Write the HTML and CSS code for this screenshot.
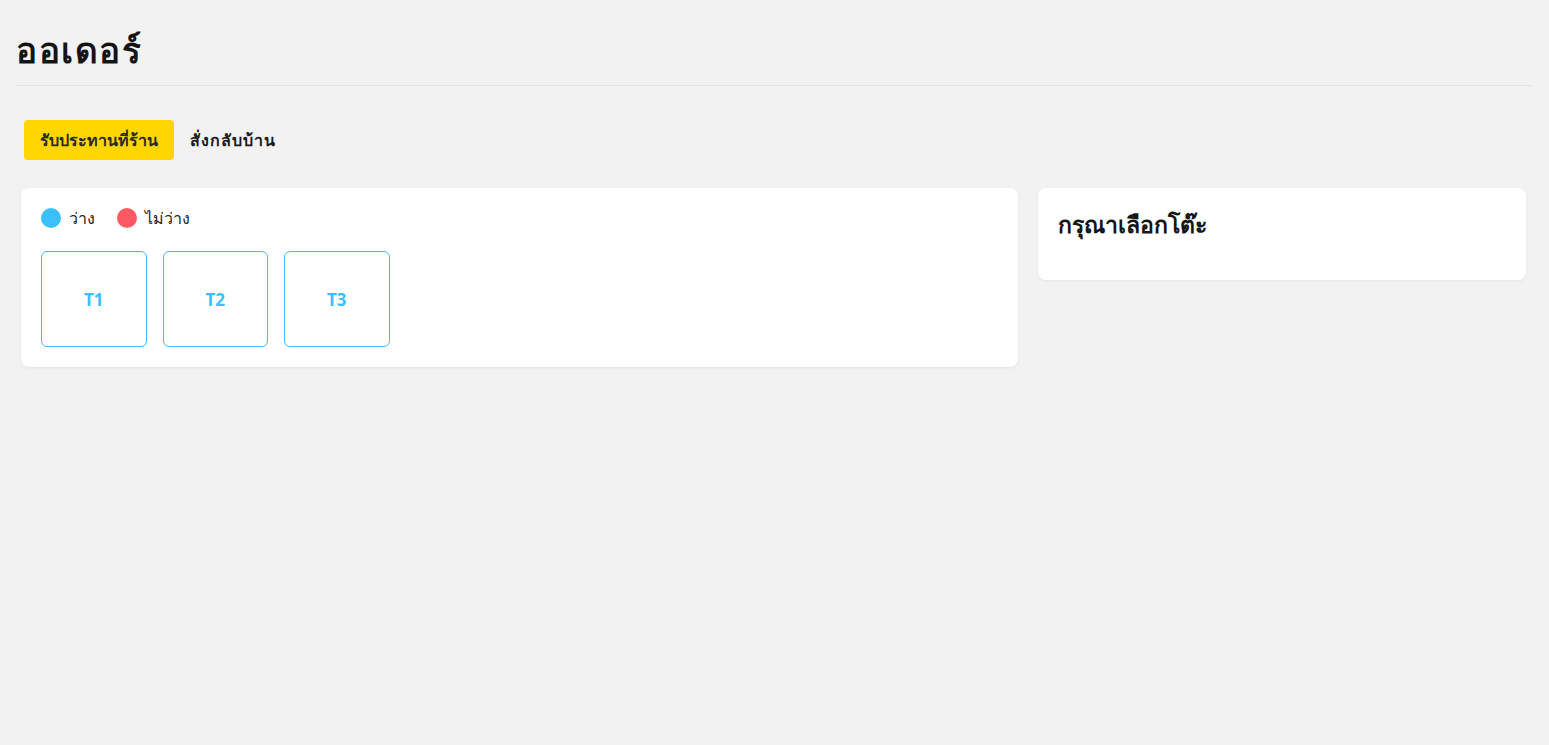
FILE: index.html
```html
<!DOCTYPE html>
<html lang="th">
<head>
<meta charset="utf-8">
<title>ออเดอร์</title>
<link rel="stylesheet" href="styles.css">
</head>
<body>
<div class="page">
  <header class="page-header">
    <h1 class="page-title">ออเดอร์</h1>
  </header>
  <nav class="tabs">
    <button class="tab tab-active">รับประทานที่ร้าน</button>
    <button class="tab tab-plain">สั่งกลับบ้าน</button>
  </nav>
  <main class="content">
    <section class="card tables-card">
      <div class="legend">
        <span class="legend-item"><span class="dot dot-free"></span>ว่าง</span>
        <span class="legend-item"><span class="dot dot-busy"></span>ไม่ว่าง</span>
      </div>
      <div class="table-list">
        <button class="table-box">T1</button>
        <button class="table-box">T2</button>
        <button class="table-box">T3</button>
      </div>
    </section>
    <aside class="card side-card">
      <h2 class="side-title">กรุณาเลือกโต๊ะ</h2>
    </aside>
  </main>
</div>
</body>
</html>
```
FILE: styles.css
```css
* { box-sizing: border-box; }
html, body { margin: 0; padding: 0; }
body {
  background: #f2f2f2;
  font-family: "Noto Sans", "Open Sans", sans-serif;
  color: #1a1a1a;
}
.page {
  padding: 16px 17px 16px 16px;
}
.page-header {
  border-bottom: 1px solid #e3e3e3;
  height: 70px;
  display: flex;
  align-items: center;
}
.page-title {
  margin: 0 0 2px 0;
  font-size: 35px;
  font-weight: 800;
  letter-spacing: 1.5px;
  color: #141414;
  line-height: 1;
}
.tabs {
  display: flex;
  gap: 0;
  padding: 34px 0 0 8px;
}
.tab {
  border: none;
  background: transparent;
  font-family: inherit;
  font-size: 16px;
  font-weight: 600;
  color: #1a1a1a;
  height: 40px;
  padding: 0 16px;
  border-radius: 4px;
  cursor: pointer;
}
.tab-active {
  background: #ffd600;
  color: #2a2a2a;
}
.tab-plain {
  letter-spacing: 1px;
}
.content {
  display: grid;
  grid-template-columns: 997fr 488fr;
  gap: 20px;
  align-items: start;
  padding: 28px 6px 0 5px;
}
.card {
  background: #fff;
  border-radius: 8px;
  box-shadow: 0 1px 3px rgba(0,0,0,0.06);
}
.tables-card {
  padding: 20px;
}
.legend {
  display: flex;
  gap: 22px;
  align-items: center;
  height: 20px;
}
.legend-item {
  display: flex;
  align-items: center;
  gap: 8px;
  font-size: 16px;
  color: #222;
}
.dot {
  width: 20px;
  height: 20px;
  border-radius: 50%;
  display: inline-block;
}
.dot-free { background: #3ac0fb; }
.dot-busy { background: #ff5a63; }
.table-list {
  display: flex;
  gap: 16px;
  margin-top: 23px;
}
.table-box {
  width: 105.5px;
  height: 96px;
  border: 1px solid #3ac0fb;
  border-radius: 6px;
  background: #fff;
  color: #3ac0fb;
  font-family: inherit;
  font-size: 17px;
  font-weight: 700;
  cursor: pointer;
}
.side-card {
  padding: 20px 20px 26px 20px;
  min-height: 92px;
}
.side-title {
  margin: 0;
  font-size: 23px;
  font-weight: 700;
  color: #151515;
  line-height: 32px;
}
```
